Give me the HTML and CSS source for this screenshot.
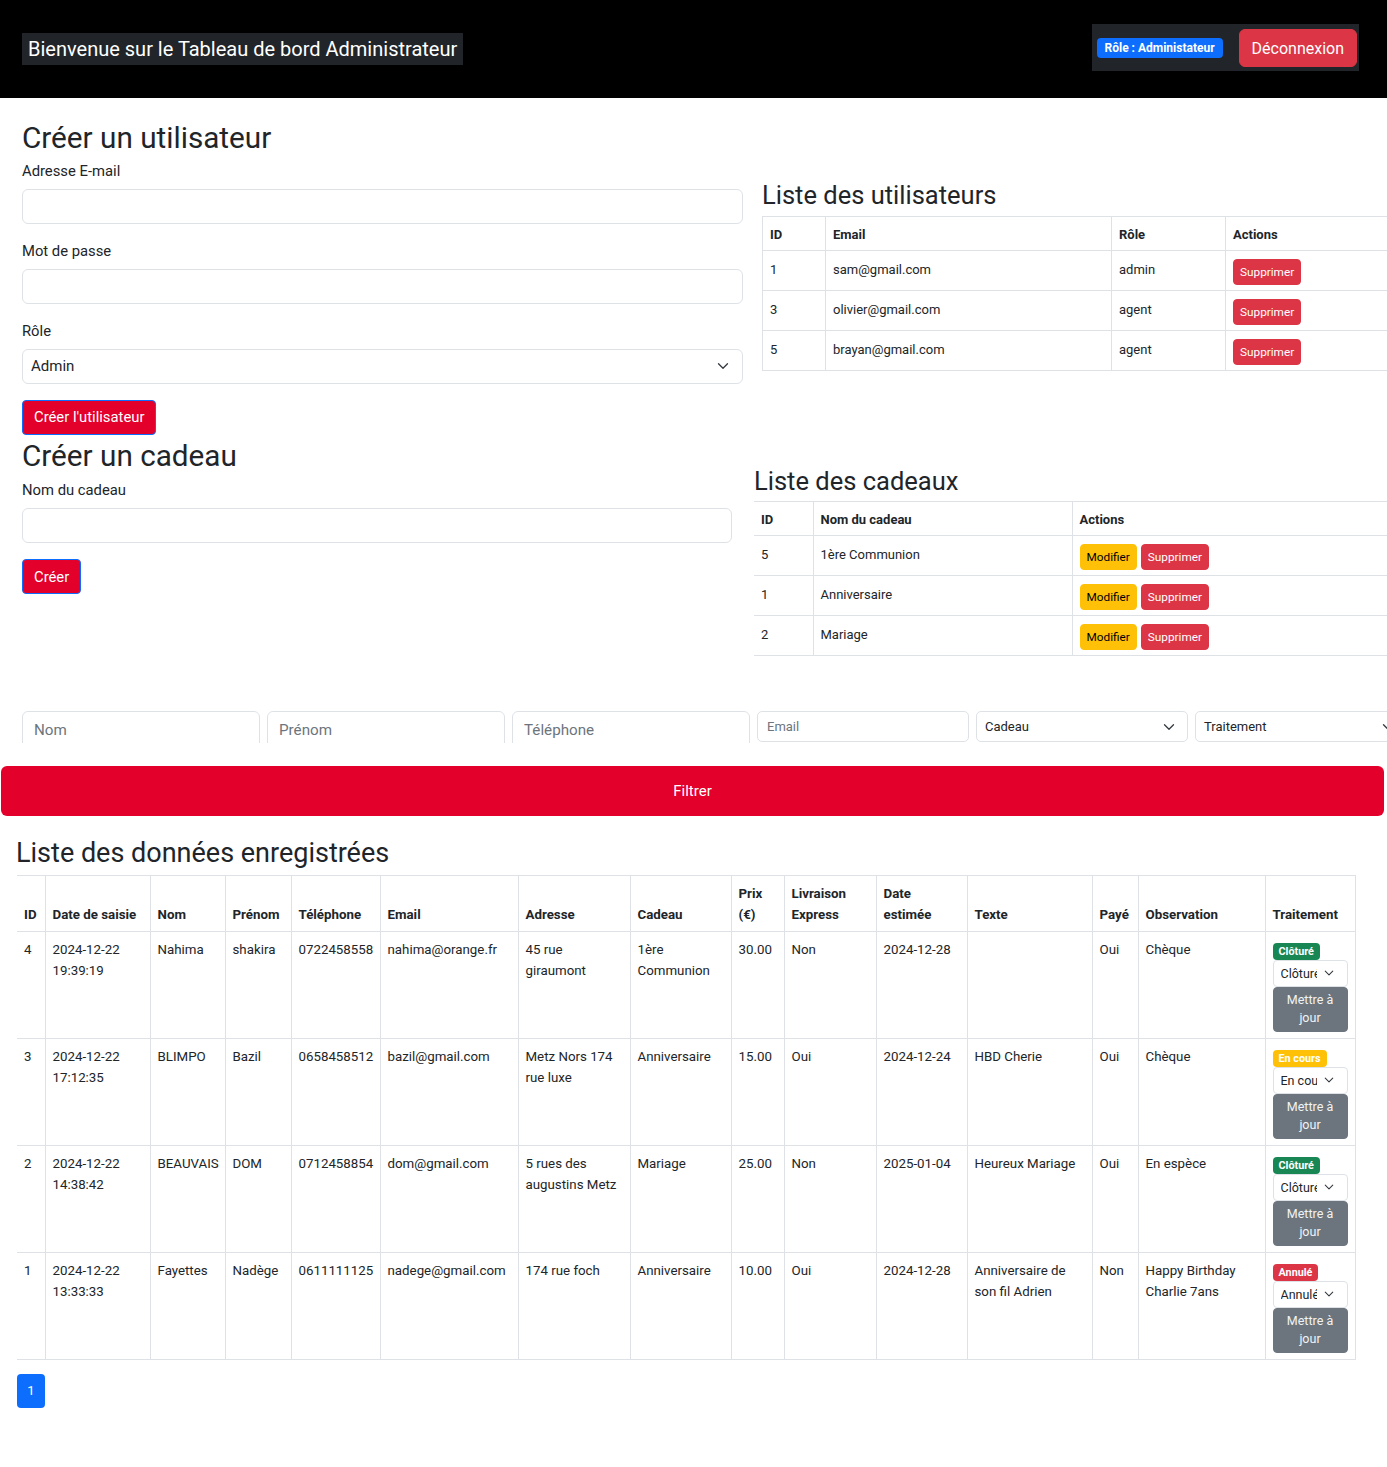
FILE: index.html
```html
<!DOCTYPE html>
<html lang="fr">
<head>
<meta charset="utf-8">
<title>Tableau de bord Administrateur</title>
<link rel="stylesheet" href="styles.css">
</head>
<body>
<header class="topbar">
  <span class="brand">Bienvenue sur le Tableau de bord Administrateur</span>
  <div class="userbox">
    <span class="badge badge-role">Rôle : Administateur</span>
    <button class="btn-logout" type="button">Déconnexion</button>
  </div>
</header>

<section class="split split-users">
  <div class="col-form">
    <h2 class="title">Créer un utilisateur</h2>
    <div class="field">
      <label class="label">Adresse E-mail</label>
      <input class="input" type="email">
    </div>
    <div class="field">
      <label class="label">Mot de passe</label>
      <input class="input" type="password">
    </div>
    <div class="field">
      <label class="label">Rôle</label>
      <div class="select select-md"><span>Admin</span><svg class="chev" viewBox="0 0 16 16"><path d="m2 5 6 6 6-6"/></svg></div>
    </div>
    <button class="btn-crimson" type="button">Créer l'utilisateur</button>
  </div>
  <div class="col-list col-users">
    <h3 class="subtitle">Liste des utilisateurs</h3>
    <table class="tbl tbl-users">
      <colgroup><col class="u-id"><col class="u-email"><col class="u-role"><col class="u-act"></colgroup>
      <thead><tr><th>ID</th><th>Email</th><th>Rôle</th><th>Actions</th></tr></thead>
      <tbody>
        <tr><td>1</td><td>sam@gmail.com</td><td>admin</td><td><button class="btn-sm btn-danger" type="button">Supprimer</button></td></tr>
        <tr><td>3</td><td>olivier@gmail.com</td><td>agent</td><td><button class="btn-sm btn-danger" type="button">Supprimer</button></td></tr>
        <tr><td>5</td><td>brayan@gmail.com</td><td>agent</td><td><button class="btn-sm btn-danger" type="button">Supprimer</button></td></tr>
      </tbody>
    </table>
  </div>
</section>

<section class="split split-gifts">
  <div class="col-form">
    <h2 class="title title-gift">Créer un cadeau</h2>
    <div class="field">
      <label class="label">Nom du cadeau</label>
      <input class="input" type="text">
    </div>
    <button class="btn-crimson" type="button">Créer</button>
  </div>
  <div class="col-list col-gifts">
    <h3 class="subtitle">Liste des cadeaux</h3>
    <table class="tbl tbl-gifts">
      <colgroup><col class="g-id"><col class="g-name"><col class="g-act"></colgroup>
      <thead><tr><th>ID</th><th>Nom du cadeau</th><th>Actions</th></tr></thead>
      <tbody>
        <tr><td>5</td><td>1ère Communion</td><td><div class="actions"><button class="btn-sm btn-warning" type="button">Modifier</button><button class="btn-sm btn-danger" type="button">Supprimer</button></div></td></tr>
        <tr><td>1</td><td>Anniversaire</td><td><div class="actions"><button class="btn-sm btn-warning" type="button">Modifier</button><button class="btn-sm btn-danger" type="button">Supprimer</button></div></td></tr>
        <tr><td>2</td><td>Mariage</td><td><div class="actions"><button class="btn-sm btn-warning" type="button">Modifier</button><button class="btn-sm btn-danger" type="button">Supprimer</button></div></td></tr>
      </tbody>
    </table>
  </div>
</section>

<form class="filters">
  <div class="clip"><input class="input-lg" placeholder="Nom"></div>
  <div class="clip"><input class="input-lg" placeholder="Prénom"></div>
  <div class="clip"><input class="input-lg" placeholder="Téléphone"></div>
  <input class="input-sm" placeholder="Email">
  <div class="select select-sm"><span>Cadeau</span><svg class="chev" viewBox="0 0 16 16"><path d="m2 5 6 6 6-6"/></svg></div>
  <div class="select select-sm"><span>Traitement</span><svg class="chev" viewBox="0 0 16 16"><path d="m2 5 6 6 6-6"/></svg></div>
</form>
<button class="btn-filter" type="button">Filtrer</button>

<section class="data">
  <h2 class="title title-data">Liste des données enregistrées</h2>
  <table class="tbl tbl-data">
    <colgroup>
      <col class="w-id"><col class="w-date"><col class="w-nom"><col class="w-prenom"><col class="w-tel"><col class="w-email"><col class="w-adr"><col class="w-cadeau"><col class="w-prix"><col class="w-liv"><col class="w-dest"><col class="w-texte"><col class="w-paye"><col class="w-obs"><col class="w-trait">
    </colgroup>
    <thead>
      <tr><th>ID</th><th>Date de saisie</th><th>Nom</th><th>Prénom</th><th>Téléphone</th><th>Email</th><th>Adresse</th><th>Cadeau</th><th>Prix<br>(€)</th><th>Livraison<br>Express</th><th>Date<br>estimée</th><th>Texte</th><th>Payé</th><th>Observation</th><th>Traitement</th></tr>
    </thead>
    <tbody>
      <tr>
        <td>4</td><td>2024-12-22 19:39:19</td><td>Nahima</td><td>shakira</td><td>0722458558</td><td>nahima@orange.fr</td><td>45 rue giraumont</td><td>1ère Communion</td><td>30.00</td><td>Non</td><td>2024-12-28</td><td></td><td>Oui</td><td>Chèque</td>
        <td><div class="status"><span class="badge badge-st st-done">Clôturé</span><div class="select select-xs"><span class="sel-text">Clôturé</span><svg class="chev" viewBox="0 0 16 16"><path d="m2 5 6 6 6-6"/></svg></div><button class="btn-update" type="button">Mettre à jour</button></div></td>
      </tr>
      <tr>
        <td>3</td><td>2024-12-22 17:12:35</td><td>BLIMPO</td><td>Bazil</td><td>0658458512</td><td>bazil@gmail.com</td><td>Metz Nors 174 rue luxe</td><td>Anniversaire</td><td>15.00</td><td>Oui</td><td>2024-12-24</td><td>HBD Cherie</td><td>Oui</td><td>Chèque</td>
        <td><div class="status"><span class="badge badge-st st-progress">En cours</span><div class="select select-xs"><span class="sel-text">En cours</span><svg class="chev" viewBox="0 0 16 16"><path d="m2 5 6 6 6-6"/></svg></div><button class="btn-update" type="button">Mettre à jour</button></div></td>
      </tr>
      <tr>
        <td>2</td><td>2024-12-22 14:38:42</td><td>BEAUVAIS</td><td>DOM</td><td>0712458854</td><td>dom@gmail.com</td><td>5 rues des augustins Metz</td><td>Mariage</td><td>25.00</td><td>Non</td><td>2025-01-04</td><td>Heureux Mariage</td><td>Oui</td><td>En espèce</td>
        <td><div class="status"><span class="badge badge-st st-done">Clôturé</span><div class="select select-xs"><span class="sel-text">Clôturé</span><svg class="chev" viewBox="0 0 16 16"><path d="m2 5 6 6 6-6"/></svg></div><button class="btn-update" type="button">Mettre à jour</button></div></td>
      </tr>
      <tr>
        <td>1</td><td>2024-12-22 13:33:33</td><td>Fayettes</td><td>Nadège</td><td>0611111125</td><td>nadege@gmail.com</td><td>174 rue foch</td><td>Anniversaire</td><td>10.00</td><td>Oui</td><td>2024-12-28</td><td>Anniversaire de son fil Adrien</td><td>Non</td><td>Happy Birthday Charlie 7ans</td>
        <td><div class="status"><span class="badge badge-st st-cancel">Annulé</span><div class="select select-xs"><span class="sel-text">Annulé</span><svg class="chev" viewBox="0 0 16 16"><path d="m2 5 6 6 6-6"/></svg></div><button class="btn-update" type="button">Mettre à jour</button></div></td>
      </tr>
    </tbody>
  </table>
  <ul class="pagination"><li class="page-item active">1</li></ul>
</section>
</body>
</html>
```

FILE: styles.css
```css
* { box-sizing: border-box; }

html, body {
  margin: 0;
  padding: 0;
}

body {
  font-family: Roboto, "Liberation Sans", Arial, sans-serif;
  font-size: 14.8px;
  line-height: 1.5;
  color: #212529;
  background: #fff;
  overflow-x: hidden;
  min-height: 1467px;
}

button, input { font-family: inherit; }

/* ---------- top bar ---------- */
.topbar {
  height: 98px;
  background: #000;
  display: flex;
  align-items: center;
  justify-content: space-between;
  padding: 0 28px 0 22px;
}

.brand {
  background: #212529;
  color: #fff;
  font-size: 20px;
  line-height: 32px;
  height: 32px;
  padding: 0 6px;
}

.userbox {
  background: #212529;
  height: 47px;
  display: flex;
  align-items: center;
  gap: 16px;
  padding: 0 2px 0 5px;
  margin-bottom: 3px;
}

.badge {
  display: inline-block;
  color: #fff;
  font-weight: 700;
  border-radius: 4px;
  white-space: nowrap;
}

.badge-role {
  background: #0d6efd;
  font-size: 12px;
  line-height: 20px;
  height: 20px;
  padding: 0 8px;
  margin-top: 1px;
}

.btn-logout {
  background: #dc3545;
  border: 1px solid #dc3545;
  color: #fff;
  font-size: 16px;
  height: 38px;
  padding: 0 12px;
  border-radius: 6px;
  margin-top: 1px;
}

/* ---------- split sections ---------- */
.split {
  display: grid;
  padding-left: 22px;
  align-items: start;
}

.split-users {
  grid-template-columns: 721px 663px;
  column-gap: 19px;
  padding-top: 22px;
}

.split-gifts {
  grid-template-columns: 710px 660px;
  column-gap: 22px;
  padding-top: 3px;
}

.title {
  font-size: 29.7px;
  font-weight: 400;
  line-height: 1.2;
  margin: 0 0 4px;
}

.title-gift { margin-bottom: 6px; }

.subtitle {
  font-size: 25.5px;
  font-weight: 400;
  line-height: 1.2;
  margin: 0 0 5px;
}

.col-users { padding-top: 60px; }
.col-gifts { padding-top: 28px; }

.field { margin-bottom: 16px; }

.label {
  display: block;
  line-height: 22px;
  margin-bottom: 7px;
}

.input {
  display: block;
  width: 100%;
  height: 35px;
  border: 1px solid #dee2e6;
  border-radius: 6px;
  padding: 0 12px;
  font-size: 15px;
  background: #fff;
}

.select {
  display: flex;
  align-items: center;
  justify-content: space-between;
  border: 1px solid #dee2e6;
  background: #fff;
  color: #212529;
  white-space: nowrap;
}

.select-md {
  height: 35px;
  border-radius: 6px;
  padding: 0 13px 0 8px;
  font-size: 15px;
}

.chev {
  width: 12px;
  height: 12px;
  flex: none;
  fill: none;
  stroke: #343a40;
  stroke-width: 1.7;
  stroke-linecap: round;
  stroke-linejoin: round;
}

.btn-crimson {
  display: block;
  height: 35px;
  background: #e3002b;
  color: #fff;
  border: 1px solid #0d6efd;
  border-radius: 4px;
  padding: 0 11px;
  font-size: 14.8px;
}

/* ---------- tables ---------- */
.tbl {
  border-collapse: collapse;
  table-layout: fixed;
  font-size: 13px;
  line-height: 21px;
}

.tbl th,
.tbl td {
  border: 1px solid #dee2e6;
  text-align: left;
  vertical-align: top;
}

.tbl th {
  font-weight: 700;
  vertical-align: bottom;
  white-space: nowrap;
}

.tbl-users { width: 663px; }
.tbl-users th, .tbl-gifts th { padding: 7px 7px 5px; }
.tbl-users td, .tbl-gifts td { padding: 8px 7px 5px; }

.tbl-gifts { width: 660px; }
.tbl-gifts th:first-child,
.tbl-gifts td:first-child { border-left: 0; }

.u-id { width: 63px; }
.u-email { width: 286px; }
.u-role { width: 114px; }
.u-act { width: 200px; }

.g-id { width: 59px; }
.g-name { width: 259px; }
.g-act { width: 342px; }

.actions { display: flex; gap: 4px; }

.btn-sm {
  display: inline-block;
  height: 26px;
  padding: 0 6px;
  font-size: 11.8px;
  line-height: 24px;
  border-radius: 4px;
  border: 1px solid transparent;
}

.btn-danger { background: #dc3545; border-color: #dc3545; color: #fff; }
.btn-warning { background: #ffc107; border-color: #ffc107; color: #000; }

/* ---------- filters ---------- */
.filters {
  display: grid;
  grid-template-columns: 238px 238px 238px 212px 212px 212px;
  column-gap: 7px;
  padding-left: 22px;
  margin: 55px 0 0;
  align-items: start;
}

.clip {
  height: 32px;
  overflow: hidden;
}

.input-lg {
  display: block;
  width: 100%;
  height: 38px;
  border: 1px solid #dee2e6;
  border-radius: 6px;
  padding: 0 11px;
  font-size: 15.2px;
  color: #212529;
}

.input-sm {
  display: block;
  width: 100%;
  height: 31px;
  border: 1px solid #dee2e6;
  border-radius: 5px;
  padding: 0 9px;
  font-size: 13px;
}

.input-lg::placeholder,
.input-sm::placeholder { color: #6c757d; opacity: 1; }

.select-sm {
  height: 31px;
  border-radius: 5px;
  padding: 0 12px 0 8px;
  font-size: 13px;
}

.btn-filter {
  display: block;
  width: 1383px;
  height: 50px;
  margin: 23px 0 0 1px;
  background: #e3002b;
  color: #fff;
  border: 0;
  border-radius: 6px;
  font-size: 15px;
}

/* ---------- data table ---------- */
.data { padding: 21px 0 0 16px; }

.title-data {
  font-size: 27px;
  margin-bottom: 5px;
}

.tbl-data {
  width: 1338px;
  margin-left: 1px;
  font-size: 13.3px;
}

.tbl-data th { padding: 7px 7px 6px; }
.tbl-data td { padding: 7px 7px 6px; }
.tbl-data th:first-child,
.tbl-data td:first-child { border-left: 0; }

.w-id { width: 28px; }
.w-date { width: 105px; }
.w-nom { width: 75px; }
.w-prenom { width: 66px; }
.w-tel { width: 89px; }
.w-email { width: 138px; }
.w-adr { width: 112px; }
.w-cadeau { width: 101px; }
.w-prix { width: 53px; }
.w-liv { width: 92px; }
.w-dest { width: 91px; }
.w-texte { width: 125px; }
.w-paye { width: 46px; }
.w-obs { width: 127px; }
.w-trait { width: 90px; }

.status {
  display: flex;
  flex-direction: column;
  align-items: flex-start;
}

.badge-st {
  margin-top: 4px;
  height: 17px;
  line-height: 17px;
  font-size: 10.8px;
  padding: 0 6px;
  border-radius: 4px;
}

.st-done { background: #198754; }
.st-progress { background: #ffc107; }
.st-cancel { background: #dc3545; }

.select-xs {
  width: 100%;
  height: 27px;
  border-radius: 4px;
  padding: 0 13px 0 7px;
  font-size: 12.5px;
}

.sel-text {
  width: 36px;
  overflow: hidden;
  white-space: nowrap;
}

.select-xs .chev { width: 10px; height: 10px; }

.btn-update {
  width: 100%;
  height: 45px;
  background: #6c757d;
  border: 1px solid #6c757d;
  border-radius: 4px;
  color: #f1f3f5;
  font-size: 12.5px;
  line-height: 18px;
  padding: 3px 10px;
  text-align: center;
}

.pagination {
  list-style: none;
  margin: 14px 0 0 1px;
  padding: 0;
  display: flex;
}

.page-item {
  width: 28px;
  height: 34px;
  line-height: 34px;
  text-align: center;
  font-size: 13px;
  border-radius: 4px;
}

.page-item.active {
  background: #0d6efd;
  color: #fff;
}
```
